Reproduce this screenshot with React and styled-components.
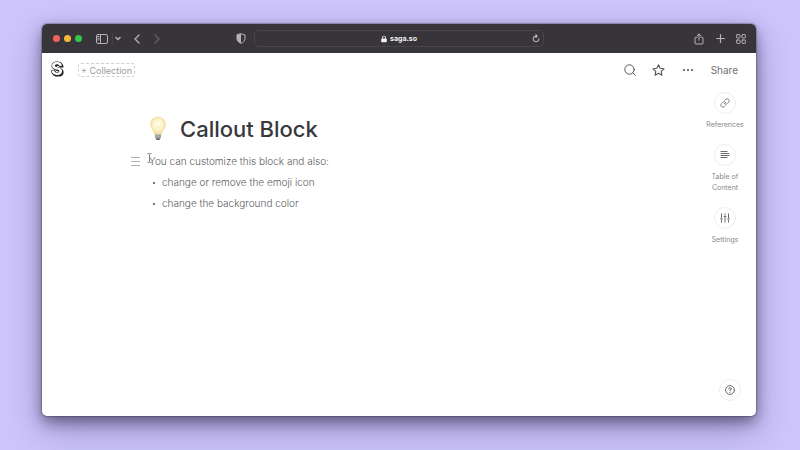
import React from 'react';
import styled, { createGlobalStyle, css } from 'styled-components';
import { HiLockClosed } from 'react-icons/hi';
import { FiLink } from 'react-icons/fi';

const font = '"Inter", "Liberation Sans", sans-serif';

const GlobalStyle = createGlobalStyle`
  * {
    box-sizing: border-box;
  }
  body {
    margin: 0;
    background: #cdc5fc;
    font-family: ${font};
    color: #5c5c5e;
  }
  button, input {
    font-family: inherit;
    color: inherit;
  }
  svg {
    display: block;
    flex: none;
  }
`;

const strokeProps = {
  fill: 'none',
  stroke: 'currentColor',
  strokeLinecap: 'round',
  strokeLinejoin: 'round',
};

const SidebarIcon = () => (
  <svg width="12" height="10" viewBox="0 0 12 10" {...strokeProps}>
    <rect x="0.5" y="0.5" width="11" height="9" rx="1.5" />
    <path d="M4.5 .5v9M1.8 2.5h1.2M1.8 4.2h1.2M1.8 5.9h1.2" />
  </svg>
);

const CaretIcon = () => (
  <svg width="6" height="5" viewBox="0 0 6 5" {...strokeProps} strokeWidth="1.6">
    <path d="M1 1.5l2 2 2-2" />
  </svg>
);

const BackIcon = () => (
  <svg width="6" height="10" viewBox="0 0 6 10" {...strokeProps} strokeWidth="1.3">
    <path d="M5 1L1 5l4 4" />
  </svg>
);

const ForwardIcon = () => (
  <svg width="6" height="10" viewBox="0 0 6 10" {...strokeProps} strokeWidth="1.3">
    <path d="M1 1l4 4-4 4" />
  </svg>
);

const ShieldIcon = () => (
  <svg width="10" height="11" viewBox="0 0 10 11" {...strokeProps}>
    <path d="M5 .8L9 2v3.6C9 7.8 7.3 9.4 5 10.3 2.7 9.4 1 7.8 1 5.6V2z" />
    <path d="M5 .8v9.5C2.7 9.4 1 7.8 1 5.6V2z" fill="currentColor" stroke="none" />
  </svg>
);

const ReloadIcon = () => (
  <svg width="8" height="9" viewBox="0 0 8 9" {...strokeProps} strokeWidth="1.1">
    <path d="M6.8 4.8A2.8 2.8 0 1 1 4 2.1h1M3.8 .7L5.2 2.1 3.8 3.5" />
  </svg>
);

const ExportIcon = () => (
  <svg width="10" height="12" viewBox="0 0 10 12" {...strokeProps}>
    <path d="M3.2 4.2H2a1 1 0 0 0-1 1V10a1 1 0 0 0 1 1h6a1 1 0 0 0 1-1V5.2a1 1 0 0 0-1-1H6.8M5 7.2V1M3.2 2.7L5 1l1.8 1.7" />
  </svg>
);

const PlusIcon = () => (
  <svg width="9" height="9" viewBox="0 0 9 9" {...strokeProps} strokeWidth="1.2">
    <path d="M4.5 .6v7.8M.6 4.5h7.8" />
  </svg>
);

const TabsIcon = () => (
  <svg width="10" height="10" viewBox="0 0 10 10" {...strokeProps}>
    <rect x="0.6" y="0.6" width="3.4" height="3.4" rx="0.6" />
    <rect x="6" y="0.6" width="3.4" height="3.4" rx="0.6" />
    <rect x="0.6" y="6" width="3.4" height="3.4" rx="0.6" />
    <rect x="6" y="6" width="3.4" height="3.4" rx="0.6" />
  </svg>
);

const SearchIcon = () => (
  <svg width="12" height="12" viewBox="0 0 12 12" {...strokeProps}>
    <circle cx="5.5" cy="5.5" r="4.7" />
    <path d="M9 9l2.3 2.3" />
  </svg>
);

const StarIcon = () => (
  <svg width="13" height="12" viewBox="0 0 13 12" {...strokeProps} strokeWidth="1.1">
    <path d="M6.5 .8l1.6 3.5 3.9.5-2.8 2.6.7 3.8-3.4-1.9-3.4 1.9.7-3.8L1 4.8l3.9-.5z" />
  </svg>
);

const DotsIcon = () => (
  <svg width="12" height="4" viewBox="0 0 12 4" fill="currentColor">
    <circle cx="2" cy="2" r="1.1" />
    <circle cx="6" cy="2" r="1.1" />
    <circle cx="10" cy="2" r="1.1" />
  </svg>
);

const ContentsIcon = () => (
  <svg width="10" height="8" viewBox="0 0 10 8" {...strokeProps} strokeWidth="1.1">
    <path d="M1 .5h6M1 2.5h8M1 4.5h8M1 6.5h6" />
  </svg>
);

const SlidersIcon = () => (
  <svg width="10" height="10" viewBox="0 0 10 10" {...strokeProps}>
    <path d="M1.5 .8v4.5M1.5 7.5v1.7M5 .8v1.4M5 4.5v4.7M8.5 .8v4.5M8.5 7.5v1.7M.6 6h1.8M4.1 3.5h1.8M7.6 6h1.8" />
  </svg>
);

const HelpIcon = () => (
  <svg width="10" height="10" viewBox="0 0 10 10" {...strokeProps}>
    <circle cx="5" cy="5" r="4.4" />
    <path d="M3.7 4A1.3 1.3 0 1 1 5 5.3v.5M5 7.3v.1" />
  </svg>
);

const BulbIcon = () => (
  <svg width="18" height="26" viewBox="0 0 18 26">
    <defs>
      <radialGradient id="glow" cx="0.5" cy="0.45" r="0.55">
        <stop offset="0" stopColor="#fffdf2" />
        <stop offset="0.5" stopColor="#fef6d4" />
        <stop offset="1" stopColor="#f3dc98" />
      </radialGradient>
    </defs>
    <path
      d="M9 1C4.6 1 1.5 4.2 1.5 8.4c0 4 3.3 6 4.200 10.100h6.600c.9-4.100 4.200-6.100 4.200-10.100C16.500 4.200 13.400 1 9 1z"
      fill="url(#glow)"
      stroke="#edd596"
      strokeWidth="0.5"
    />
    <path d="M7.8 18L6.9 10.5l1.3.8.8-.8.8.8 1.3-.8L10.200 18" fill="none" stroke="#f5e2a6" strokeWidth="0.6" />
    <path d="M6 18.300h6v3.200l-1.500 2.500h-3L6 21.500z" fill="#b3b5b6" />
    <path d="M6 19.800h6M6 21.500h6" stroke="#898c8d" strokeWidth="0.7" />
    <path d="M7 22.500h4l-.8 1.500H7.800z" fill="#5a5b5d" />
  </svg>
);

const HandleIcon = () => (
  <svg width="9" height="9" viewBox="0 0 9 9" stroke="#b1b1b3">
    <path d="M0 .5h9M0 4.5h9M0 8.5h9" />
  </svg>
);

const SagaLogo = () => (
  <svg width="18" height="24" viewBox="0 0 18 24" fontFamily={font} fontSize="18" fontWeight="700">
    <text
      x="2"
      y="18"
      fill="#fff"
      stroke="#222"
      strokeWidth="1.2"
      paintOrder="stroke"
      style={{ filter: 'drop-shadow(1px 1px 0 #222)' }}
    >
      S
    </text>
  </svg>
);

const Desktop = styled.div`
  display: flex;
  min-height: 100vh;
  padding: 24px 44px 34px 42px;
`;

const Window = styled.div`
  flex: 1;
  min-width: 0;
  display: flex;
  flex-direction: column;
  overflow: hidden;
  background: #fff;
  border-radius: 5px;
  box-shadow: 0 0 1px 1px rgba(40, 35, 60, 0.3), 0 6px 14px rgba(30, 25, 50, 0.5),
    0 14px 36px rgba(40, 30, 80, 0.3);
`;

const BrowserBar = styled.div`
  display: grid;
  grid-template-columns: 1fr minmax(0, 290px) 1fr;
  align-items: center;
  height: 29px;
  background: #38353a;
  color: #b5b3b7;
`;

const BarSide = styled.div`
  display: flex;
  align-items: center;
  justify-content: ${props => (props.$end ? 'flex-end' : 'flex-start')};
  gap: ${props => (props.$end ? '1px' : '0')};
  padding: ${props => (props.$end ? '0 5px 0 0' : '0 3px 0 11px')};
`;

const Lights = styled.div`
  display: flex;
  gap: 4px;
  margin-right: 10px;
`;

const Light = styled.span`
  width: 7px;
  height: 7px;
  border-radius: 50%;
  background: ${props => props.$color};
`;

const PlainButton = styled.button`
  display: flex;
  align-items: center;
  justify-content: center;
  padding: 0;
  border: 0;
  background: none;
  cursor: pointer;
`;

const BarButton = styled(PlainButton)`
  width: 20px;
  height: 20px;
  ${props => props.$push && css`margin-left: auto;`}
  &:disabled {
    color: #626065;
  }
`;

const CaretButton = styled(BarButton)`
  width: 11px;
  height: 12px;
  margin-right: 4px;
  border-left: 1px solid #454248;
`;

const AddressBar = styled.form`
  display: grid;
  grid-template-columns: 14px 1fr 14px;
  align-items: center;
  height: 17px;
  border: 1px solid #48454b;
  border-radius: 5px;
`;

const Address = styled.label`
  grid-column: 2;
  display: flex;
  align-items: center;
  justify-content: center;
  gap: 2px;
  color: #f1f0f2;
`;

const AddressInput = styled.input`
  width: 28px;
  padding: 0;
  border: 0;
  outline: 0;
  background: none;
  font-size: 7px;
  font-weight: 700;
  line-height: 13px;
`;

const TopBar = styled.header`
  display: flex;
  align-items: center;
  height: 34px;
  padding: 0 18px 0 7px;
`;

const Logo = styled.a`
  margin-right: 11px;
  padding-bottom: 3px;
`;

const CollectionButton = styled(PlainButton)`
  height: 14px;
  padding: 0 2px;
  border: 1px dashed #cfcfd1;
  border-radius: 3px;
  color: #9c9c9e;
  font-size: 9px;
`;

const Actions = styled.div`
  display: flex;
  align-items: center;
  gap: 9px;
  margin-left: auto;
  color: #565658;
`;

const ActionButton = styled(PlainButton)`
  min-width: 20px;
  height: 20px;
  font-size: 10px;
`;

const ShareButton = styled(ActionButton)`
  margin-left: 4px;
  color: #707072;
`;

const Workspace = styled.div`
  flex: 1;
  display: grid;
  grid-template-columns: 1fr 56px;
  padding-right: 3px;
`;

const Document = styled.main`
  padding: 26px 16px 0 107px;
  font-size: 10px;
  font-weight: 300;
  line-height: 21px;
`;

const Title = styled.h1`
  display: flex;
  align-items: center;
  gap: 13px;
  margin: 0 0 6px;
  color: #39393c;
  font-size: 22px;
  font-weight: 500;
  line-height: 32px;
`;

const Paragraph = styled.p`
  position: relative;
  margin: 0;
`;

const Handle = styled(PlainButton)`
  position: absolute;
  top: 6px;
  left: -18px;
`;

const TextCursor = styled.svg`
  position: absolute;
  top: 2px;
  left: -2px;
`;

const List = styled.ul`
  margin: 0;
  padding-left: 13px;
  list-style: none;
`;

const Item = styled.li`
  position: relative;
  &::before {
    content: '';
    position: absolute;
    top: 10px;
    left: -9px;
    width: 2px;
    height: 2px;
    border-radius: 50%;
    background: #4a4a4c;
  }
`;

const Rail = styled.aside`
  display: flex;
  flex-direction: column;
  align-items: center;
  gap: 14px;
  padding: 5px 0 15px;
`;

const RailButton = styled(PlainButton)`
  flex-direction: column;
  gap: 5px;
  color: #88888a;
  font-size: 7px;
  line-height: 11px;
`;

const Circle = styled.span`
  display: flex;
  align-items: center;
  justify-content: center;
  width: 22px;
  height: 22px;
  border: 1px solid #eeeeef;
  border-radius: 50%;
  color: #6b6b6d;
`;

const RailLabel = styled.span`
  max-width: 40px;
`;

const HelpButton = styled(RailButton)`
  align-self: flex-end;
  margin: auto 12px 0 0;
`;

const tools = [
  { label: 'References', icon: <FiLink size={10} /> },
  { label: 'Table of Content', icon: <ContentsIcon /> },
  { label: 'Settings', icon: <SlidersIcon /> },
];

const Browser = () => (
  <BrowserBar>
    <BarSide>
      <Lights>
        <Light $color="#f2625b" />
        <Light $color="#f5b83d" />
        <Light $color="#35c64b" />
      </Lights>
      <BarButton aria-label="Sidebar"><SidebarIcon /></BarButton>
      <CaretButton aria-label="Tab groups"><CaretIcon /></CaretButton>
      <BarButton aria-label="Back"><BackIcon /></BarButton>
      <BarButton aria-label="Forward" disabled><ForwardIcon /></BarButton>
      <BarButton aria-label="Privacy report" $push><ShieldIcon /></BarButton>
    </BarSide>
    <AddressBar onSubmit={e => e.preventDefault()}>
      <Address>
        <HiLockClosed size={8} />
        <AddressInput aria-label="Address" defaultValue="saga.so" />
      </Address>
      <PlainButton type="button" aria-label="Reload"><ReloadIcon /></PlainButton>
    </AddressBar>
    <BarSide $end>
      <BarButton aria-label="Share page"><ExportIcon /></BarButton>
      <BarButton aria-label="New tab"><PlusIcon /></BarButton>
      <BarButton aria-label="Tab overview"><TabsIcon /></BarButton>
    </BarSide>
  </BrowserBar>
);

const App = () => (
  <>
    <GlobalStyle />
    <Desktop>
      <Window>
        <Browser />
        <TopBar>
          <Logo href="#" aria-label="Saga"><SagaLogo /></Logo>
          <CollectionButton>+ Collection</CollectionButton>
          <Actions>
            <ActionButton aria-label="Search"><SearchIcon /></ActionButton>
            <ActionButton aria-label="Favorite"><StarIcon /></ActionButton>
            <ActionButton aria-label="More"><DotsIcon /></ActionButton>
            <ShareButton>Share</ShareButton>
          </Actions>
        </TopBar>
        <Workspace>
          <Document>
            <Title>
              <BulbIcon />
              Callout Block
            </Title>
            <Paragraph>
              <Handle aria-label="Block menu"><HandleIcon /></Handle>
              You can customize this block and also:
              <TextCursor width="5" height="10" viewBox="0 0 5 10" fill="none" stroke="#888">
                <path d="M.5 .5h1.5l.5.5.5-.5h1.5M2.5 1v8M.5 9.5h1.5l.5-.5.5.5h1.5" />
              </TextCursor>
            </Paragraph>
            <List>
              <Item>change or remove the emoji icon</Item>
              <Item>change the background color</Item>
            </List>
          </Document>
          <Rail>
            {tools.map(tool => (
              <RailButton key={tool.label}>
                <Circle>{tool.icon}</Circle>
                <RailLabel>{tool.label}</RailLabel>
              </RailButton>
            ))}
            <HelpButton aria-label="Help">
              <Circle><HelpIcon /></Circle>
            </HelpButton>
          </Rail>
        </Workspace>
      </Window>
    </Desktop>
  </>
);

export default App;
